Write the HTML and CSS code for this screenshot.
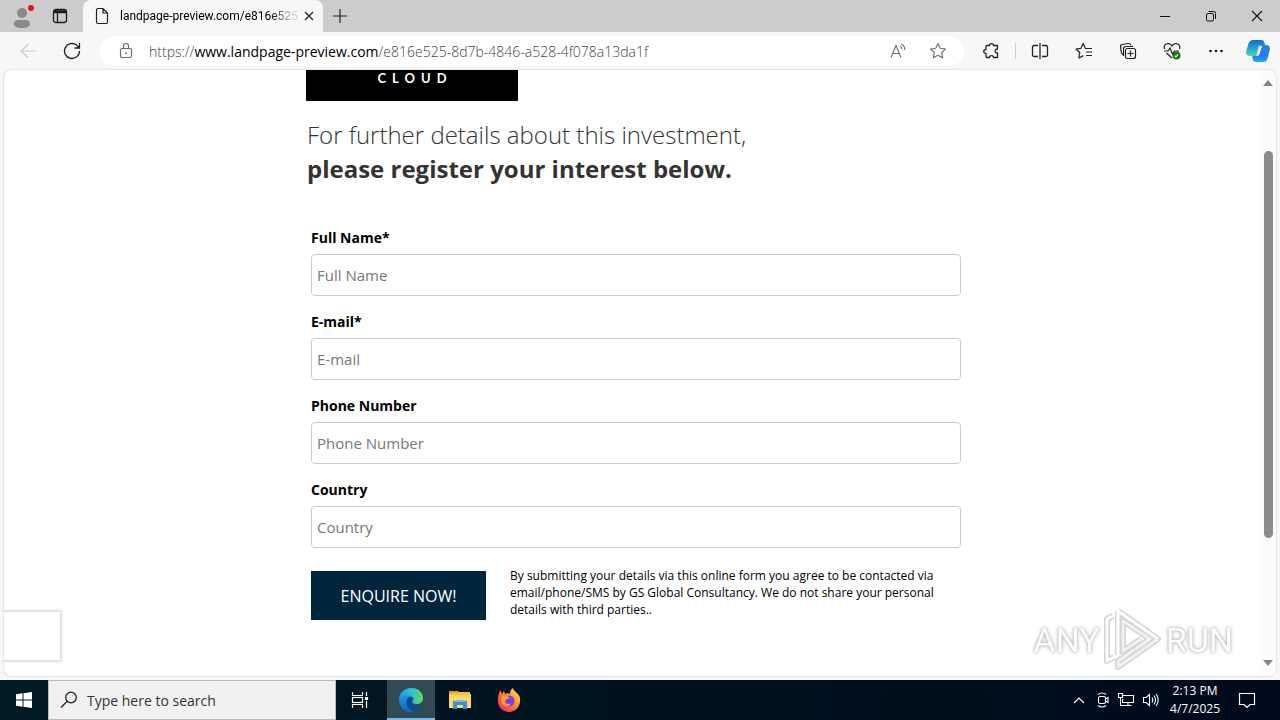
FILE: index.html
```html
<!DOCTYPE html>
<html lang="en">
<head>
<meta charset="utf-8">
<title>landpage-preview.com</title>
<link rel="stylesheet" href="styles.css">
</head>
<body>
<header class="tabs">
  <button class="profile" aria-label="Profile"><svg width="24" height="28" viewBox="0 0 24 28"><g fill="#8b8886"><circle cx="12" cy="11" r="5"/><path d="M4 22c0-3 2-4 4-4h8c2 0 4 1 4 4 0 3-4 4-8 4s-8-1-8-4z"/></g><circle cx="21" cy="6" r="3" fill="#e81123"/></svg></button>
  <button class="tab-actions" aria-label="Tab actions"><svg width="16" height="16" viewBox="0 0 16 16" fill="none" stroke="#1b1b1b" stroke-width="1.3"><rect x="1.5" y="1.5" width="13" height="13" rx="2.5"/><path d="M2 3h12M2 4.500h12M5.500 5v9" /></svg></button>
  <div class="tab">
    <svg width="14" height="18" viewBox="0 0 14 18" fill="none" stroke="#222" stroke-width="1.2"><path d="M3 1.500h5l4.500 4.500v9a1.500 1.500 0 0 1-1.500 1.500H3A1.500 1.500 0 0 1 1.500 15V3A1.500 1.500 0 0 1 3 1.500zM8 1.500V6h4.500"/></svg>
    <span class="tab-title">landpage-preview.com/e816e525</span>
    <button aria-label="Close tab"><svg width="10" height="10" viewBox="0 0 10 10" stroke="#222" stroke-width="1.300"><path d="M1 1l8 8M9 1l-8 8"/></svg></button>
  </div>
  <button class="new-tab" aria-label="New tab"><svg width="14" height="14" viewBox="0 0 14 14" stroke="#222" stroke-width="1.200"><path d="M0 7h14M7 0v14"/></svg></button>
  <div class="window-controls">
    <button aria-label="Minimize"><svg width="12" height="12" viewBox="0 0 12 12" stroke="#111"><path d="M1 6.500h10"/></svg></button>
    <button aria-label="Restore"><svg width="12" height="12" viewBox="0 0 12 12" fill="none" stroke="#111"><rect x="1.500" y="3.500" width="7" height="7.500" rx="1.500"/><path d="M3.500 1.500H8.500Q10.500 1.500 10.500 3.500V9"/></svg></button>
    <button aria-label="Close"><svg width="12" height="12" viewBox="0 0 12 12" stroke="#111" stroke-width="1.100"><path d="M1 1l10 10M11 1L1 11"/></svg></button>
  </div>
</header>

<nav class="toolbar">
  <button aria-label="Back"><svg width="16" height="16" viewBox="0 0 16 16" fill="none" stroke="#c9c9c9" stroke-width="1.200"><path d="M16 8H1M8 1.500L1.200 8 8 14.500"/></svg></button>
  <button class="reload" aria-label="Refresh"><svg width="18" height="18" viewBox="0 0 18 18" fill="none" stroke="#222" stroke-width="1.300"><path d="M16.500 9A7.500 7.500 0 1 1 13.500 3l2.500 2.500M16.500 1v5h-5"/></svg></button>
  <div class="address">
    <svg width="14" height="18" viewBox="0 0 14 18" fill="none" stroke="#6c6c6c" stroke-width="1.200"><rect x="1.500" y="6.500" width="11" height="9" rx="1.500"/><path d="M4.500 6.500V4Q4.500 1.500 7 1.500T9.500 4v2.500"/><circle cx="7" cy="11" r="1" fill="#6c6c6c" stroke="none"/></svg>
    <span class="url">https://<b>www.landpage-preview.com</b>/e816e525-8d7b-4846-a528-4f078a13da1f</span>
    <button aria-label="Read aloud"><svg width="18" height="16" viewBox="0 0 18 16" fill="none" stroke="#6c6c6c" stroke-width="1.100"><path d="M2 14.500L7 2.500l5 12M3.800 10.500h6.500M11 3q2 1 1.800 3.300M12.500 1q3.500 2 3.200 6"/></svg></button>
    <button class="favorite" aria-label="Add to favorites"><svg width="18" height="18" viewBox="0 0 18 18" fill="none" stroke="#6c6c6c" stroke-width="1.100" stroke-linejoin="round"><path d="M9 1.500l2.300 4.800 5.200.7-3.800 3.600.9 5.200L9 13.300l-4.600 2.500.9-5.200L1.500 7l5.200-.7z"/></svg></button>
  </div>
  <div class="tools">
    <button aria-label="Extensions"><svg width="18" height="18" viewBox="0 0 18 18" fill="none" stroke="#222" stroke-width="1.300" stroke-linejoin="round"><path d="M5 3.500h2.500C7.300 1 11.700 1 11.500 3.500H15.500V7C12.500 6.800 12.500 11.200 15.500 11V15.500H11.500C11.700 13 7.300 13 7.500 15.500H5Q4 15.500 4 14.500V11.500C1 11.500 1 7.500 4 7.500V4.500Q4 3.500 5 3.500z"/></svg></button>
    <span class="divider"></span>
    <button aria-label="Split screen"><svg width="18" height="18" viewBox="0 0 18 18" fill="none" stroke="#222" stroke-width="1.300"><path d="M7 3.500H3Q1.500 3.500 1.500 5v8q0 1.500 1.500 1.500h4M11 3.500h4q1.500 0 1.500 1.500v8q0 1.500-1.500 1.500h-4M9 1v16"/></svg></button>
    <button aria-label="Favorites"><svg width="18" height="18" viewBox="0 0 18 18" fill="none" stroke="#222" stroke-width="1.200" stroke-linejoin="round"><path d="M17 6.500H10.500L8.200 1.500 6 6.300l-5 .7 3.800 3.500-.9 5.500L8.300 13.600M11 10h6M11 13.500h6"/></svg></button>
    <button aria-label="Collections"><svg width="18" height="18" viewBox="0 0 18 18" fill="none" stroke="#222" stroke-width="1.200"><path d="M4 12.500Q2.500 12 2.200 10L1.500 4.500Q1.300 2.800 3 2.500L9.500 1.500Q11.300 1.300 11.800 3.300M4.500 14V7q0-2.500 2.500-2.500h7"/><rect x="6.500" y="6.500" width="10" height="10" rx="2"/><path d="M8.500 11.500h6M11.500 8.500v6"/></svg></button>
    <button aria-label="Browser essentials"><svg width="18" height="18" viewBox="0 0 18 18" fill="none" stroke="#222" stroke-width="1.200"><path d="M1.500 7C0 1 7 0 9 4c2-4 9-3 7.500 3M1 9h4l2-3 2.500 6 2-3H16M3.500 11L9 16"/><circle cx="13.500" cy="13.500" r="4" fill="#107c10" stroke="none"/><path stroke="#fff" d="M11.700 13.700l1.200 1.200 2.300-2.500"/></svg></button>
    <button aria-label="Settings and more"><svg width="18" height="18" viewBox="0 0 18 18"><g fill="#111"><circle cx="3.500" cy="9" r="1.300"/><circle cx="9" cy="9" r="1.300"/><circle cx="14.500" cy="9" r="1.300"/></g></svg></button>
    <button class="copilot" aria-label="Copilot"><svg width="24" height="24" viewBox="0 0 24 24"><defs><linearGradient id="ca" x1="0" y1="0" x2="0" y2="1"><stop stop-color="#1769c7"/><stop offset=".5" stop-color="#1ba3d9"/><stop offset="1" stop-color="#57d79a"/></linearGradient><linearGradient id="cb" x1="0" y1="0" x2="0" y2="1"><stop stop-color="#2387e8"/><stop offset=".6" stop-color="#2878ee"/><stop offset="1" stop-color="#17b2f5"/></linearGradient></defs><path fill="url(#cb)" d="M15 6h5c3 0 4.500 2 3.700 5l-2 8c-.8 3-2 4-5 4H10c-2 0-3-1-3.500-4L6 16h3c2 0 2.500-1 3-3l1-5c.4-1.500 1-2 2-2z"/><path fill="url(#ca)" d="M7 1h8c2 0 3 1 3.500 3l.5 2h-4c-2 0-2.600 1-3 3l-1 5c-.5 2-1.500 3-3 3H4c-3 0-4.500-2-3.700-5l2-7C3.500 2 5 1 7 1z"/><path fill="#fff" d="M14 7h2l-2.500 8q-.6 2-2.500 2H9.500q1.500-.5 2-2l1.500-6z"/></svg></button>
  </div>
</nav>

<div class="stage">
  <div class="viewport">
    <main class="content">
      <div class="logo">CLOUD</div>
      <h1>For further details about this investment,<br><strong>please register your interest below.</strong></h1>
      <form>
        <div class="field"><label for="name">Full Name*</label><input id="name" type="text" placeholder="Full Name"></div>
        <div class="field"><label for="email">E-mail*</label><input id="email" type="email" placeholder="E-mail"></div>
        <div class="field"><label for="phone">Phone Number</label><input id="phone" type="tel" placeholder="Phone Number"></div>
        <div class="field"><label for="country">Country</label><input id="country" type="text" placeholder="Country"></div>
        <div class="submit-row">
          <button class="enquire" type="button">ENQUIRE NOW!</button>
          <p>By submitting your details via this online form you agree to be contacted via email/phone/SMS by GS Global Consultancy. We do not share your personal details with third parties..</p>
        </div>
      </form>
    </main>
    <div class="scrollbar">
      <svg width="10" height="6" viewBox="0 0 10 6"><path fill="#858585" d="M5 0l5 6H0z"/></svg>
      <div class="track"><div class="thumb"></div></div>
      <svg width="10" height="6" viewBox="0 0 10 6"><path fill="#858585" d="M0 0h10L5 6z"/></svg>
    </div>
    <div class="status-box"></div>
    <div class="watermark">
      <span>ANY</span>
      <svg width="58" height="64" viewBox="0 0 58 64" fill="none" stroke-linejoin="round"><g stroke="#d4d4d4" stroke-width="6"><path d="M9 8L3 11V53l7-4M14 3v44M14 3l40 28-40 28V53l32-22-27-18v30l18-12"/></g><g stroke="#fff" stroke-width="3"><path d="M9 8L3 11V53l7-4M14 47V3l40 28"/></g><g stroke="#f0f0f0" stroke-width="3"><path d="M54 31L14 59V53l32-22-27-18v30l18-12"/></g></svg>
      <span>RUN</span>
    </div>
  </div>
</div>

<footer class="taskbar">
  <button class="start" aria-label="Start"><svg width="16" height="16" viewBox="0 0 16 16" fill="#fff"><path d="M0 2.200L6.500 1.300V7.500H0zM7.500 1.200L16 0v7.500H7.500zM0 8.500h6.500v6.200L0 13.800zM7.500 8.500H16V16l-8.500-1.200z"/></svg></button>
  <label class="search" for="search"><svg width="18" height="18" viewBox="0 0 18 18" fill="none" stroke="#222" stroke-width="1.300"><circle cx="11" cy="6.500" r="5.300"/><path d="M7.200 10.300L1 16.500"/></svg><input id="search" type="text" placeholder="Type here to search"></label>
  <button class="task" aria-label="Task view"><svg width="18" height="18" viewBox="0 0 18 18" fill="none" stroke="#fff" stroke-width="1.200"><path d="M1.500 1v3.500h10V1M1.500 17v-3.500h10V17M15.500 1v4M15.500 10v7"/><rect x="1.500" y="6.500" width="10" height="5"/><path fill="#fff" d="M14.500 6.500h2v2h-2z"/></svg></button>
  <button class="task active" aria-label="Microsoft Edge"><svg width="24" height="24" viewBox="0 0 24 24"><defs><linearGradient id="ea" x1="0" y1="0" x2="1" y2="0"><stop stop-color="#1b9de2"/><stop offset=".5" stop-color="#2bc3d2"/><stop offset="1" stop-color="#62d957"/></linearGradient><linearGradient id="eb" x1="0" y1="0" x2="0" y2="1"><stop stop-color="#1f9de5"/><stop offset="1" stop-color="#1460bd"/></linearGradient></defs><path fill="url(#eb)" d="M0 12C1 7 6 5 10 6.500c4 1 5 4 4 6-2 4 3 7 8 4.500C19 22 15 24 12 24 5 24 0 19 0 12z"/><path fill="#0c4a91" d="M8 11c-2 6 2 12 8 12 3-1 5-3 6.500-6-4 2-9 1-9.500-3-.2-2 1-3 1-4-2-2-5-1-6 1z"/><path fill="url(#ea)" d="M0 12C0 5 5 0 12 0c8 0 12 5 12 10 0 4-3 6-6 6-3 0-5-1-4-3 2-3-1-6-5-6-4 0-8 2-9 5z"/></svg></button>
  <button class="task" aria-label="File Explorer"><svg width="24" height="24" viewBox="0 0 24 24"><path fill="#e59b19" d="M1 3h9l2 2h10v3H1z"/><path fill="#ffd768" d="M1 6h22v14H1z"/><path fill="#f5bf42" d="M1 5h8l2-1h11v3H1z"/><path fill="#3991d2" d="M5 13h14v8h-4v-4H9v4H5z"/><path fill="#73bde9" d="M7 12h10v2H7z"/></svg></button>
  <button class="task" aria-label="Firefox"><svg width="24" height="24" viewBox="0 0 24 24"><defs><linearGradient id="fa" x1="1" y1="0" x2="0" y2="1"><stop stop-color="#fff44f"/><stop offset=".4" stop-color="#ff9a2e"/><stop offset=".7" stop-color="#ff4b45"/><stop offset="1" stop-color="#e31587"/></linearGradient></defs><path fill="url(#fa)" d="M3 2l2 4 2-3 1 3c2-1 4-1 5 0 0-3 1-5 3-6 0 3 6 5 7 10 1 8-4 14-11 14C5 24 0 18 1 11c0-4 1-5 2-9z"/><circle cx="12" cy="13" r="5.500" fill="#7542e5"/><path fill="#ff9a2e" d="M5 8c3-1 6 0 8 2-2 1-4 1-5 3 0 3 4 4 6 2-1 4-7 5-9 1-2-3-1-6 0-8z"/></svg></button>
  <div class="tray">
    <svg width="12" height="8" viewBox="0 0 12 8" fill="none" stroke="#fff" stroke-width="1.200"><path d="M1 7l5-5 5 5"/></svg>
    <svg width="14" height="16" viewBox="0 0 14 16" fill="none" stroke="#fff" stroke-width="1.100"><rect x="2.500" y="4.500" width="7" height="7" rx="1.500"/><path d="M9.500 7L12 5.500v5L9.500 9M2 2.500q4-3 8 0M2 13.500q4 3 8 0"/></svg>
    <svg width="18" height="16" viewBox="0 0 18 16" fill="none" stroke="#fff" stroke-width="1.100"><path d="M6 3.500h10.500v7H5.500V7M11 10.500v3M6.500 13.500h8M1.500 1.500h4v4h-4zM3.500 5.500v8H7"/></svg>
    <svg width="18" height="16" viewBox="0 0 18 16" fill="none" stroke="#fff" stroke-width="1.100"><path d="M1.500 5.500H4l3.500-3v11L4 10.500H1.500zM10 5.500q1.500 2.500 0 5M12 3.500q3 4.500 0 9M14.200 2q4 6 0 12"/></svg>
    <time class="clock">2:13 PM<br>4/7/2025</time>
    <svg class="notes" width="18" height="18" viewBox="0 0 18 18" fill="none" stroke="#fff" stroke-width="1.200"><path d="M1.500 2.500h15v11H12l-3 3-3-3H1.500z"/></svg>
  </div>
</footer>
</body>
</html>
```

FILE: styles.css
```css
* { box-sizing: border-box; }
body {
  margin: 0;
  height: 100vh;
  display: flex;
  flex-direction: column;
  overflow: hidden;
  background: #f7f7f7;
  color: #000;
  font-family: "Open Sans", "Noto Sans", sans-serif;
}
button {
  padding: 0;
  border: 0;
  background: none;
  font: inherit;
  display: flex;
  align-items: center;
  justify-content: center;
}
svg { display: block; flex: none; }

.tabs {
  display: flex;
  align-items: center;
  height: 32px;
  flex: none;
  background: #cccccc;
}
.profile { margin-left: 10px; }
.tab-actions { margin-left: 18px; }
.tab {
  display: flex;
  align-items: center;
  align-self: stretch;
  width: 240px;
  margin-left: 15px;
  padding: 0 11px 0 12px;
  background: #f7f7f7;
  border-radius: 8px 8px 0 0;
}
.tab-title {
  flex: 1;
  margin: 0 6px 0 11px;
  white-space: nowrap;
  font-family: Roboto, sans-serif;
  font-size: 12px;
  background: linear-gradient(90deg, #000 84%, #ccc 97%);
  background-clip: text;
  color: transparent;
}
.new-tab { margin-left: 10px; }
.window-controls { display: flex; margin-left: auto; }
.window-controls button { width: 46px; height: 32px; }

.toolbar {
  display: flex;
  align-items: center;
  height: 38px;
  flex: none;
  padding: 0 10px 0 20px;
}
.reload { margin-left: 27px; }
.address {
  flex: 1;
  display: flex;
  align-items: center;
  height: 30px;
  margin-left: 19px;
  padding: 0 17px 0 19px;
  border-radius: 15px;
  background: #fff;
}
.url {
  flex: 1;
  margin-left: 16px;
  font-size: 14px;
  font-weight: 300;
  white-space: nowrap;
  color: #444;
}
.url b { font-weight: 400; color: #000; }
.favorite { margin-left: 22px; }
.tools { display: flex; align-items: center; margin-left: 18px; }
.tools button { width: 18px; margin-right: 26px; }
.tools button:first-child { margin-right: 15px; }
.tools .divider { width: 1px; height: 16px; margin-right: 15px; background: #cfcfcf; }
.tools button.copilot { width: 24px; margin: 0; }
.tools button:nth-last-child(2) { margin-right: 21px; }

.stage { flex: 1; min-height: 0; padding: 0 4px 4px; }
.viewport {
  position: relative;
  display: flex;
  height: 100%;
  overflow: hidden;
  background: #fff;
  border-radius: 8px;
  box-shadow: 0 0 2px #bbb;
}
.content { flex: 1; padding: 0 294px 0 302px; }
.logo {
  width: 212px;
  height: 31px;
  padding-left: 6px;
  background: #000;
  color: #fff;
  font-family: Lato, sans-serif;
  font-size: 13px;
  font-weight: 700;
  line-height: 17px;
  letter-spacing: 6px;
  text-align: center;
}
h1 {
  margin: 17px 0 42px 1px;
  color: #333;
  font-size: 24px;
  font-weight: 300;
  line-height: 34px;
  white-space: nowrap;
}
h1 strong { font-weight: 700; }
form { display: flex; flex-direction: column; gap: 16px; padding: 0 5px; }
.field { display: flex; flex-direction: column; gap: 6px; }
.field label { font-size: 14px; font-weight: 700; line-height: 20px; }
.field input {
  height: 42px;
  padding: 0 5px;
  border: 1px solid #ccc;
  border-radius: 4px;
  font: 15px "Open Sans", sans-serif;
}
.field input::placeholder { color: #777; }
.submit-row { display: flex; align-items: flex-start; gap: 24px; padding-top: 3px; }
.enquire {
  width: 175px;
  height: 49px;
  margin-top: 4px;
  background: #00263d;
  color: #fff;
  font-size: 16px;
}
.submit-row p { flex: 1; margin: 0 20px 0 0; font-size: 12px; line-height: 17px; }

.scrollbar {
  display: flex;
  flex-direction: column;
  align-items: center;
  width: 16px;
  padding: 10px 0;
  background: #fcfcfc;
}
.track { flex: 1; width: 9px; padding: 65px 0 122px; }
.thumb { height: 100%; border-radius: 5px; background: #8b8b8b; }
.status-box {
  position: absolute;
  left: 0;
  bottom: 16px;
  width: 56px;
  height: 48px;
  background: #fff;
  box-shadow: 0 0 3px 1px #c4c4c4;
}
.watermark {
  position: absolute;
  right: 43px;
  bottom: 4px;
  display: flex;
  align-items: center;
  gap: 4px;
  color: #fcfcfc;
  font: 34px Roboto, sans-serif;
  text-shadow: 0 0 2px #aaa, 0 0 4px #bbb;
}

.taskbar {
  display: flex;
  align-items: center;
  height: 40px;
  flex: none;
  background: linear-gradient(90deg, #001b24, #00101f 60%, #000a1c);
  color: #fff;
}
.start { width: 48px; height: 40px; }
.search {
  display: flex;
  align-items: center;
  width: 288px;
  height: 40px;
  padding: 0 11px;
  border: 1px solid #bdbdbd;
  background: #f1f1f1;
}
.search input {
  flex: 1;
  min-width: 0;
  margin-left: 9px;
  padding: 0;
  border: 0;
  background: none;
  font: 14px "Open Sans", sans-serif;
}
.search input::placeholder { color: #333; }
.task { width: 48px; height: 40px; margin-right: 1px; }
.task.active { background: #324a54; box-shadow: inset 0 -2px #76b9ed; }
.search + .task { margin-right: 3px; }
.tray { display: flex; align-items: center; gap: 7px; margin-left: auto; padding-right: 24px; }
.tray > svg:first-child { margin-right: 4px; }
.clock { margin-left: 3px; font-size: 12px; line-height: 18px; text-align: center; }
.notes { margin-left: 11px; }
```
